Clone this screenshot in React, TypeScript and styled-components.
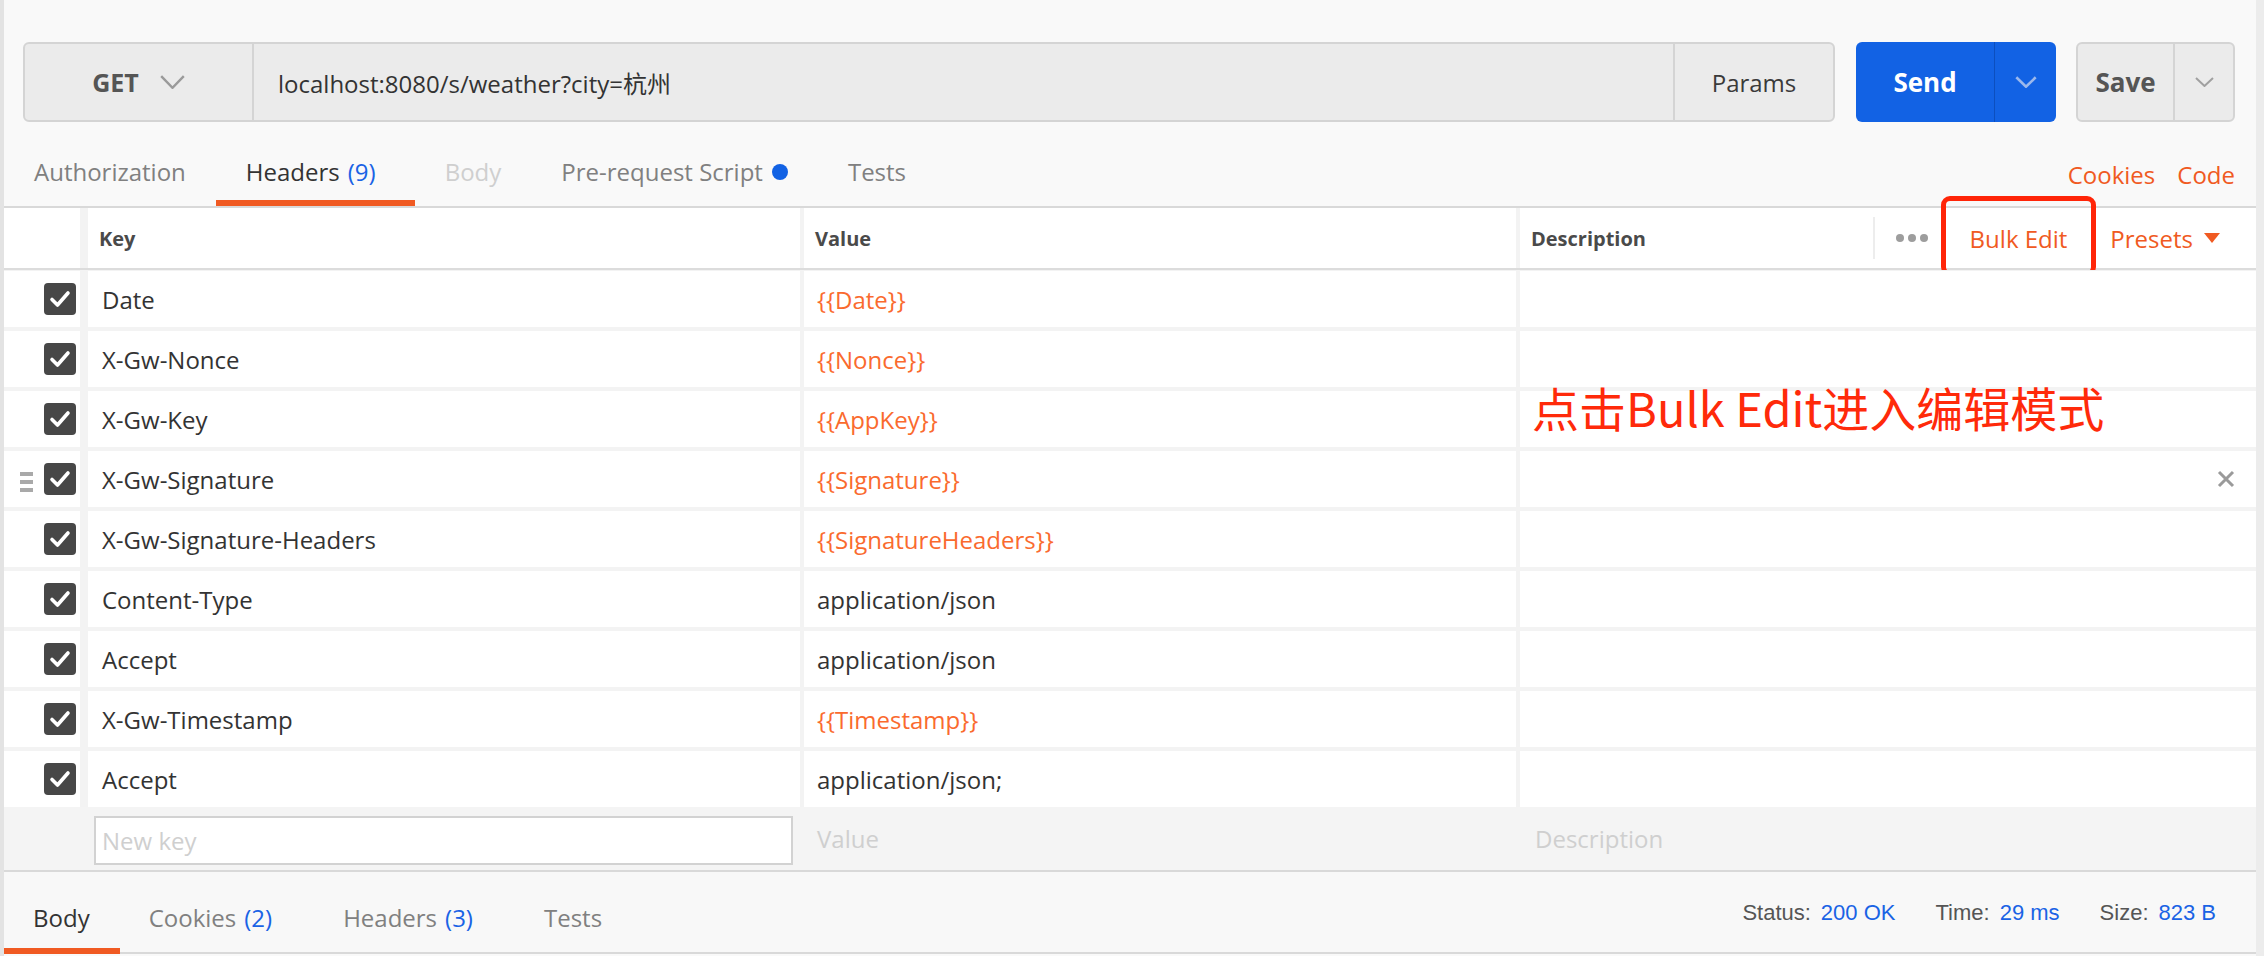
import React from "react";
import styled, { createGlobalStyle } from "styled-components";

const GlobalStyle = createGlobalStyle`
  html, body { margin: 0; padding: 0; }
  body {
    width: 2264px;
    height: 956px;
    overflow: hidden;
    font-family: "Open Sans", "Noto Sans", sans-serif;
    background: #f9f9f9;
  }
  * { box-sizing: border-box; }
`;

const ORANGE = "#f05a22";
const VAR_ORANGE = "#fa6a2e";
const BLUE = "#1a63e5";

const Page = styled.div`
  width: 2264px;
  height: 956px;
  display: flex;
  flex-direction: column;
  background: #f9f9f9;
  border-left: 4px solid #e3e3e3;
  border-right: 8px solid #ececec;
`;

const Top = styled.div`
  padding: 42px 21px 0 19px;
`;

const UrlRow = styled.div`
  display: flex;
  height: 80px;
  gap: 21px;
`;

const UrlGroup = styled.div`
  flex: 1;
  display: flex;
  border: 2px solid #d4d4d4;
  border-radius: 6px;
  background: #ebebeb;
`;

const MethodBox = styled.div`
  width: 229px;
  display: flex;
  align-items: center;
  justify-content: center;
  gap: 21px;
  border-right: 2px solid #d4d4d4;
  font-size: 25px;
  font-weight: 700;
  color: #555;
`;

const UrlText = styled.div`
  flex: 1;
  display: flex;
  align-items: center;
  padding-left: 24px;
  font-size: 24px;
  color: #333;
  font-family: "Open Sans", "Noto Sans CJK SC", sans-serif;
`;

const ParamsBox = styled.div`
  width: 160px;
  display: flex;
  align-items: center;
  justify-content: center;
  border-left: 2px solid #d4d4d4;
  font-size: 24px;
  color: #3a3a3a;
`;

const SplitButton = styled.div<{ $primary?: boolean }>`
  display: flex;
  height: 80px;
  width: ${(p) => (p.$primary ? "200px" : "159px")};
  border-radius: 6px;
  background: ${(p) => (p.$primary ? "#1262e4" : "#ebebeb")};
  border: ${(p) => (p.$primary ? "none" : "2px solid #d4d4d4")};
  margin-left: ${(p) => (p.$primary ? "0" : "-1px")};
`;

const SplitMain = styled.div<{ $primary?: boolean }>`
  width: ${(p) => (p.$primary ? "139px" : "97px")};
  display: flex;
  align-items: center;
  justify-content: center;
  font-size: 26px;
  font-weight: 700;
  color: ${(p) => (p.$primary ? "#ffffff" : "#555")};
  border-right: ${(p) => (p.$primary ? "1px solid #0c4fbf" : "2px solid #d4d4d4")};
`;

const SplitArrow = styled.div`
  flex: 1;
  display: flex;
  align-items: center;
  justify-content: center;
`;

const TabBar = styled.div`
  display: flex;
  align-items: flex-end;
  height: 86px;
  border-bottom: 2px solid #d9d9d9;
`;

const Tab = styled.div<{ $active?: boolean; $muted?: boolean }>`
  display: flex;
  align-items: center;
  padding: 0 30px 12px;
  line-height: 32px;
  font-size: 24px;
  color: ${(p) => (p.$active ? "#333" : p.$muted ? "#cfcfcf" : "#808080")};
  border-bottom: 6px solid ${(p) => (p.$active ? ORANGE : "transparent")};
`;

const Count = styled.span<{ $pad?: number }>`
  color: ${BLUE};
  margin-left: 8px;
  padding-right: ${(p) => p.$pad ?? 0}px;
`;

const Dot = styled.span`
  width: 16px;
  height: 16px;
  border-radius: 50%;
  background: #1262e4;
  margin-left: 9px;
`;

const TabLinks = styled.div`
  margin-left: auto;
  display: flex;
  gap: 22px;
  padding: 0 21px 15px 0;
  font-size: 24px;
  line-height: 32px;
  color: ${ORANGE};
`;

const Grid = styled.div`
  display: grid;
  grid-template-columns: 80px 712px 712px 1fr;
  column-gap: 4px;
  background: #f3f3f3;
`;

const HeaderRow = styled(Grid)`
  height: 62px;
  border-bottom: 2px solid #dcdcdc;
`;

const HeadCell = styled.div<{ $first?: boolean }>`
  background: #fff;
  display: flex;
  align-items: center;
  padding-left: 11px;
  font-size: 20px;
  font-weight: 700;
  color: #4a4a4a;
  margin-right: ${(p) => (p.$first ? "4px" : "0")};
`;

const HeadTools = styled.div`
  margin-left: auto;
  display: flex;
  align-items: center;
  height: 100%;
  padding-right: 36px;
  font-weight: 400;
  font-size: 24px;
  color: ${ORANGE};
`;

const VDivider = styled.div`
  width: 2px;
  height: 42px;
  background: #ededed;
  margin-right: 21px;
`;

const Dots = styled.div`
  display: flex;
  gap: 4px;
  margin-right: 42px;
  & > span {
    width: 8px;
    height: 8px;
    border-radius: 50%;
    background: #9d9d9d;
  }
`;

const BulkEdit = styled.span`
  position: relative;
  margin-right: 43px;
  &::after {
    content: "";
    position: absolute;
    left: -29px;
    right: -29px;
    top: -26px;
    bottom: -21px;
    border: 5px solid #ff2508;
    border-radius: 9px;
  }
`;

const Presets = styled.span`
  display: flex;
  align-items: center;
  gap: 11px;
`;

const Rows = styled.div`
  position: relative;
  display: flex;
  flex-direction: column;
  gap: 4px;
  padding-top: 1px;
  background: #f3f3f3;
`;

const DataRow = styled(Grid)`
  height: 56px;
`;

const CheckCell = styled.div`
  background: #fff;
  margin-right: 4px;
  display: flex;
  align-items: center;
  justify-content: flex-end;
  gap: 11px;
  padding-right: 4px;
`;

const Handle = styled.div<{ $show?: boolean }>`
  display: flex;
  flex-direction: column;
  gap: 4px;
  visibility: ${(p) => (p.$show ? "visible" : "hidden")};
  margin-top: 6px;
  & > span {
    width: 13px;
    height: 4px;
    background: #a9a9a9;
  }
`;

const Box = styled.div`
  width: 32px;
  height: 32px;
  border-radius: 4px;
  background: #474747;
  display: flex;
  align-items: center;
  justify-content: center;
`;

const Cell = styled.div<{ $var?: boolean; $pad?: number }>`
  background: #fff;
  display: flex;
  align-items: center;
  padding-left: ${(p) => p.$pad ?? 13}px;
  padding-right: 21px;
  font-size: 24px;
  color: ${(p) => (p.$var ? VAR_ORANGE : "#333")};
`;

const CloseIcon = styled.div`
  margin-left: auto;
  display: flex;
`;

const Annotation = styled.div`
  position: absolute;
  left: 1528px;
  top: 113px;
  font-family: "Noto Sans CJK SC", sans-serif;
  font-size: 47px;
  line-height: 47px;
  color: #ff2a0a;
  white-space: nowrap;
`;

const NewRow = styled(Grid)`
  height: 65px;
  background: #f4f4f4;
  border-bottom: 2px solid #d9d9d9;
`;

const NewCell = styled.div<{ $pad?: number }>`
  display: flex;
  align-items: center;
  padding-left: ${(p) => p.$pad ?? 13}px;
  font-size: 24px;
  color: #cfcfcf;
`;

const NewKeyInput = styled.div`
  margin: 9px 7px 5px 6px;
  border: 2px solid #d2d2d2;
  background: #fff;
  display: flex;
  align-items: center;
  padding-left: 6px;
  font-size: 24px;
  color: #cfcfcf;
`;

const ResponseBar = styled.div`
  height: 82px;
  display: flex;
  align-items: flex-end;
  border-bottom: 2px solid #d9d9d9;
  background: #f8f8f8;
`;

const RespTab = styled(Tab)`
  padding: 0 30px 14px 29px;
  margin-bottom: -2px;
`;

const Status = styled.div`
  margin-left: auto;
  align-self: center;
  margin-top: 2px;
  display: flex;
  gap: 40px;
  padding-right: 40px;
  font-family: "Liberation Sans", Arial, sans-serif;
  font-size: 22px;
  color: #555;
`;

const StatusItem = styled.span`
  display: flex;
  gap: 10px;
  & > b {
    font-weight: 400;
    color: ${BLUE};
  }
`;

const Chevron = ({ w, h, color, sw }: { w: number; h: number; color: string; sw: number }) => (
  <svg width={w} height={h} viewBox={`0 0 ${w} ${h}`} fill="none">
    <polyline
      points={`${sw / 2},${sw / 2} ${w / 2},${h - sw / 2} ${w - sw / 2},${sw / 2}`}
      stroke={color}
      strokeWidth={sw}
      strokeLinejoin="miter"
    />
  </svg>
);

const CheckMark = () => (
  <svg width="22" height="18" viewBox="0 0 22 18" fill="none">
    <polyline points="3,9.5 8.5,15 19,3" stroke="#fff" strokeWidth="3.6" strokeLinecap="round" strokeLinejoin="round" />
  </svg>
);

const rows: { k: string; v: string; isVar: boolean; hover?: boolean }[] = [
  { k: "Date", v: "{{Date}}", isVar: true },
  { k: "X-Gw-Nonce", v: "{{Nonce}}", isVar: true },
  { k: "X-Gw-Key", v: "{{AppKey}}", isVar: true },
  { k: "X-Gw-Signature", v: "{{Signature}}", isVar: true, hover: true },
  { k: "X-Gw-Signature-Headers", v: "{{SignatureHeaders}}", isVar: true },
  { k: "Content-Type", v: "application/json", isVar: false },
  { k: "Accept", v: "application/json", isVar: false },
  { k: "X-Gw-Timestamp", v: "{{Timestamp}}", isVar: true },
  { k: "Accept", v: "application/json;", isVar: false },
];

export default function App() {
  return (
    <>
      <GlobalStyle />
      <Page>
        <Top>
          <UrlRow>
            <UrlGroup>
              <MethodBox>
                <span>GET</span>
                <Chevron w={25} h={14} color="#9a9a9a" sw={2.4} />
              </MethodBox>
              <UrlText>localhost:8080/s/weather?city=杭州</UrlText>
              <ParamsBox>Params</ParamsBox>
            </UrlGroup>
            <SplitButton $primary>
              <SplitMain $primary>Send</SplitMain>
              <SplitArrow>
                <Chevron w={22} h={12} color="#9bb8ec" sw={2.6} />
              </SplitArrow>
            </SplitButton>
            <SplitButton>
              <SplitMain>Save</SplitMain>
              <SplitArrow>
                <Chevron w={19} h={10} color="#a0a0a0" sw={2} />
              </SplitArrow>
            </SplitButton>
          </UrlRow>
        </Top>
        <TabBar>
          <Tab>Authorization</Tab>
          <Tab $active>
            Headers<Count $pad={9}>(9)</Count>
          </Tab>
          <Tab $muted>Body</Tab>
          <Tab>
            Pre-request Script<Dot />
          </Tab>
          <Tab>Tests</Tab>
          <TabLinks>
            <span>Cookies</span>
            <span>Code</span>
          </TabLinks>
        </TabBar>
        <HeaderRow>
          <HeadCell $first />
          <HeadCell>Key</HeadCell>
          <HeadCell>Value</HeadCell>
          <HeadCell>
            Description
            <HeadTools>
              <VDivider />
              <Dots>
                <span />
                <span />
                <span />
              </Dots>
              <BulkEdit>Bulk Edit</BulkEdit>
              <Presets>
                Presets
                <svg width="16" height="10" viewBox="0 0 16 10">
                  <polygon points="0,0 16,0 8,10" fill={ORANGE} />
                </svg>
              </Presets>
            </HeadTools>
          </HeadCell>
        </HeaderRow>
        <Rows>
          {rows.map((r, i) => (
            <DataRow key={i}>
              <CheckCell>
                <Handle $show={!!r.hover}>
                  <span />
                  <span />
                  <span />
                </Handle>
                <Box>
                  <CheckMark />
                </Box>
              </CheckCell>
              <Cell $pad={14}>{r.k}</Cell>
              <Cell $var={r.isVar}>{r.v}</Cell>
              <Cell>
                {r.hover && (
                  <CloseIcon>
                    <svg width="18" height="18" viewBox="0 0 18 18">
                      <path d="M2 2 L16 16 M16 2 L2 16" stroke="#9a9a9a" strokeWidth="3" />
                    </svg>
                  </CloseIcon>
                )}
              </Cell>
            </DataRow>
          ))}
          <Annotation>点击Bulk Edit进入编辑模式</Annotation>
        </Rows>
        <NewRow>
          <div />
          <NewKeyInput>New key</NewKeyInput>
          <NewCell>Value</NewCell>
          <NewCell $pad={15}>Description</NewCell>
        </NewRow>
        <ResponseBar>
          <RespTab $active>Body</RespTab>
          <RespTab>
            Cookies<Count $pad={12}>(2)</Count>
          </RespTab>
          <RespTab>
            Headers<Count $pad={12}>(3)</Count>
          </RespTab>
          <RespTab>Tests</RespTab>
          <Status>
            <StatusItem>
              Status:<b>200 OK</b>
            </StatusItem>
            <StatusItem>
              Time:<b>29 ms</b>
            </StatusItem>
            <StatusItem>
              Size:<b>823 B</b>
            </StatusItem>
          </Status>
        </ResponseBar>
      </Page>
    </>
  );
}
